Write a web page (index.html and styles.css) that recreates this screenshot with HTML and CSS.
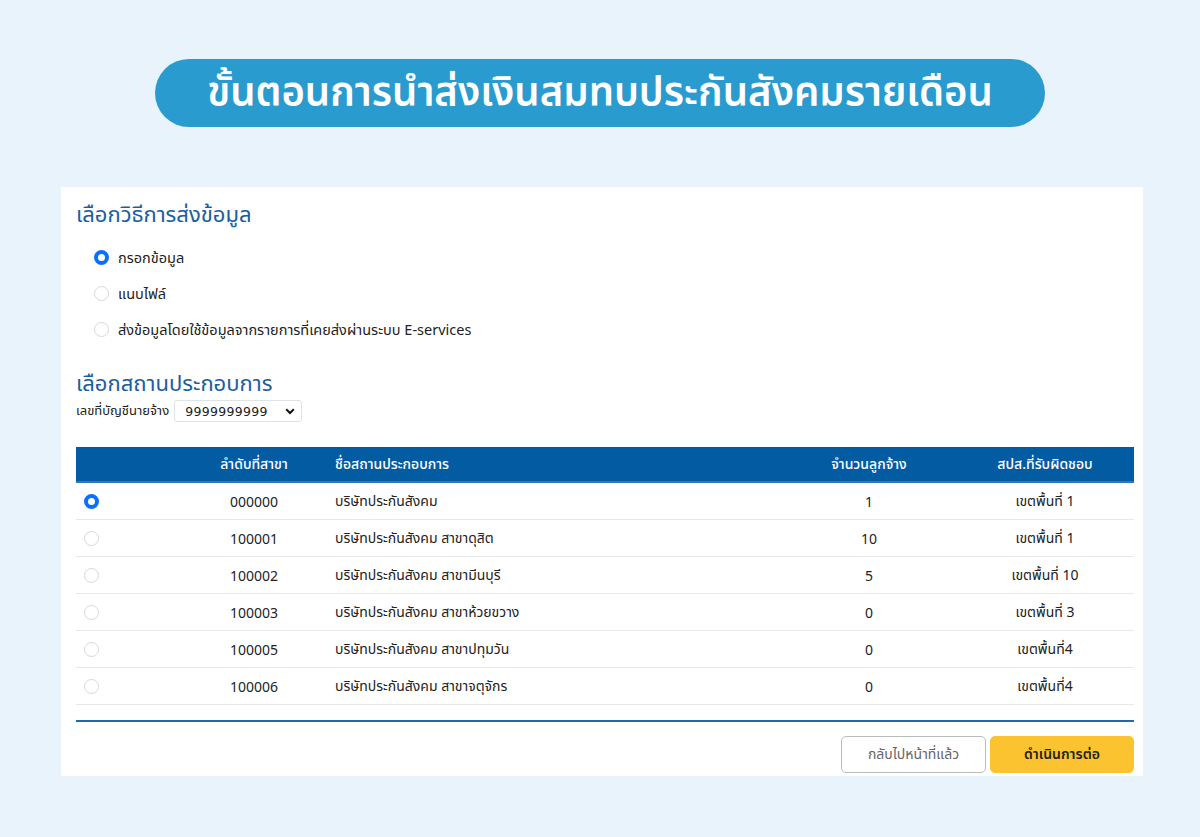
FILE: index.html
```html
<!DOCTYPE html>
<html lang="th">
<head>
<meta charset="utf-8">
<title>ขั้นตอนการนำส่งเงินสมทบประกันสังคมรายเดือน</title>
<link rel="stylesheet" href="styles.css">
</head>
<body>
<div class="page">
  <div class="title-wrap">
    <h1 class="title">ขั้นตอนการนำส่งเงินสมทบประกันสังคมรายเดือน</h1>
  </div>
  <div class="card">
    <h2 class="section-title first">เลือกวิธีการส่งข้อมูล</h2>
    <div class="options">
      <label class="option"><span class="radio checked"></span><span>กรอกข้อมูล</span></label>
      <label class="option"><span class="radio"></span><span>แนบไฟล์</span></label>
      <label class="option"><span class="radio"></span><span>ส่งข้อมูลโดยใช้ข้อมูลจากรายการที่เคยส่งผ่านระบบ E-services</span></label>
    </div>
    <h2 class="section-title second">เลือกสถานประกอบการ</h2>
    <div class="account">
      <span class="account-label">เลขที่บัญชีนายจ้าง</span>
      <div class="select">
        <span>9999999999</span>
        <svg class="chev" width="10" height="7" viewBox="0 0 10 7"><path d="M1.2 1.3 L5 5 L8.8 1.3" fill="none" stroke="#111" stroke-width="2"/></svg>
      </div>
    </div>
    <div class="table">
      <div class="row head">
        <div class="c-radio"></div>
        <div class="c-no">ลำดับที่สาขา</div>
        <div class="c-name">ชื่อสถานประกอบการ</div>
        <div class="c-emp">จำนวนลูกจ้าง</div>
        <div class="c-area">สปส.ที่รับผิดชอบ</div>
      </div>
      <div class="row">
        <div class="c-radio"><span class="radio checked"></span></div>
        <div class="c-no">000000</div>
        <div class="c-name">บริษัทประกันสังคม</div>
        <div class="c-emp">1</div>
        <div class="c-area">เขตพื้นที่ 1</div>
      </div>
      <div class="row">
        <div class="c-radio"><span class="radio"></span></div>
        <div class="c-no">100001</div>
        <div class="c-name">บริษัทประกันสังคม สาขาดุสิต</div>
        <div class="c-emp">10</div>
        <div class="c-area">เขตพื้นที่ 1</div>
      </div>
      <div class="row">
        <div class="c-radio"><span class="radio"></span></div>
        <div class="c-no">100002</div>
        <div class="c-name">บริษัทประกันสังคม สาขามีนบุรี</div>
        <div class="c-emp">5</div>
        <div class="c-area">เขตพื้นที่ 10</div>
      </div>
      <div class="row">
        <div class="c-radio"><span class="radio"></span></div>
        <div class="c-no">100003</div>
        <div class="c-name">บริษัทประกันสังคม สาขาห้วยขวาง</div>
        <div class="c-emp">0</div>
        <div class="c-area">เขตพื้นที่ 3</div>
      </div>
      <div class="row">
        <div class="c-radio"><span class="radio"></span></div>
        <div class="c-no">100005</div>
        <div class="c-name">บริษัทประกันสังคม สาขาปทุมวัน</div>
        <div class="c-emp">0</div>
        <div class="c-area">เขตพื้นที่4</div>
      </div>
      <div class="row">
        <div class="c-radio"><span class="radio"></span></div>
        <div class="c-no">100006</div>
        <div class="c-name">บริษัทประกันสังคม สาขาจตุจักร</div>
        <div class="c-emp">0</div>
        <div class="c-area">เขตพื้นที่4</div>
      </div>
    </div>
    <div class="divider"></div>
    <div class="actions">
      <button class="btn btn-back">กลับไปหน้าที่แล้ว</button>
      <button class="btn btn-next">ดำเนินการต่อ</button>
    </div>
  </div>
</div>
</body>
</html>
```
FILE: styles.css
```css
* { box-sizing: border-box; }
html, body { margin: 0; padding: 0; }
body {
  background: #e8f3fb;
  font-family: "Noto Sans", "Noto Sans Thai", "Liberation Sans", sans-serif;
  color: #222;
  width: 1200px;
  height: 837px;
  overflow: hidden;
}
.page { padding-top: 59px; }
.title-wrap { display: flex; justify-content: center; }
.title {
  margin: 0;
  width: 890px;
  height: 68px;
  border-radius: 34px;
  background: #2a9bcf;
  color: #fff;
  font-size: 40px;
  font-weight: 600;
  display: flex;
  align-items: center;
  justify-content: center;
}
.card {
  margin: 60px 0 0 61px;
  width: 1082px;
  height: 589px;
  background: #fff;
  padding: 12px 9px 0 15px;
}
.section-title {
  margin: 0;
  font-size: 22px;
  font-weight: 400;
  color: #1b5e9e;
  line-height: 28px;
}
.options { display: flex; flex-direction: column; gap: 12px; padding: 18px 0 0 18px; }
.option { display: flex; align-items: center; gap: 9px; font-size: 14.5px; line-height: 24px; color: #222; }
.radio {
  width: 15px; height: 15px; border-radius: 50%;
  border: 1px solid #d5d8dc;
  background: #fff;
  display: inline-block;
  flex: none;
}
.radio.checked { border: 4px solid #0d6efd; }
.section-title.second { margin-top: 27px; }
.account { display: flex; align-items: center; gap: 5px; margin-top: 4px; }
.account-label { font-size: 13px; }
.select {
  width: 128px; height: 22px;
  border: 1px solid #dfe2e6;
  border-radius: 3px;
  display: flex; align-items: center; justify-content: space-between;
  padding: 0 6px 0 10px;
  font-family: "DejaVu Sans", sans-serif;
  font-size: 12.5px;
  letter-spacing: 0.3px;
  color: #222;
}
.table { margin-top: 25px; }
.row {
  display: grid;
  grid-template-columns: 30px 229px 447px 174px 178px;
  align-items: center;
  height: 37px;
  border-bottom: 1px solid #e6e8ea;
  font-size: 14px;
  color: #222;
}
.row.head {
  height: 36px;
  background: #035ba2;
  border-bottom: 2px solid #2d79bb;
  color: #fff;
  font-weight: 500;
}
.c-radio { display: flex; justify-content: center; }
.c-no { text-align: center; padding-left: 67px; }
.c-name { padding-left: 0; }
.c-emp { text-align: center; }
.c-area { text-align: center; }
.divider { margin-top: 15px; height: 2px; background: #1f6aa8; }
.actions { display: flex; justify-content: flex-end; gap: 4px; margin-top: 14px; }
.btn {
  height: 37px;
  border-radius: 5px;
  font-family: inherit;
  font-size: 14px;
  padding: 0;
}
.btn-back { width: 145px; background: #fff; border: 1px solid #b9bcbf; color: #666; }
.btn-next { width: 144px; background: #fcc330; border: 1px solid #fcc330; color: #222; font-weight: 600; }
```
